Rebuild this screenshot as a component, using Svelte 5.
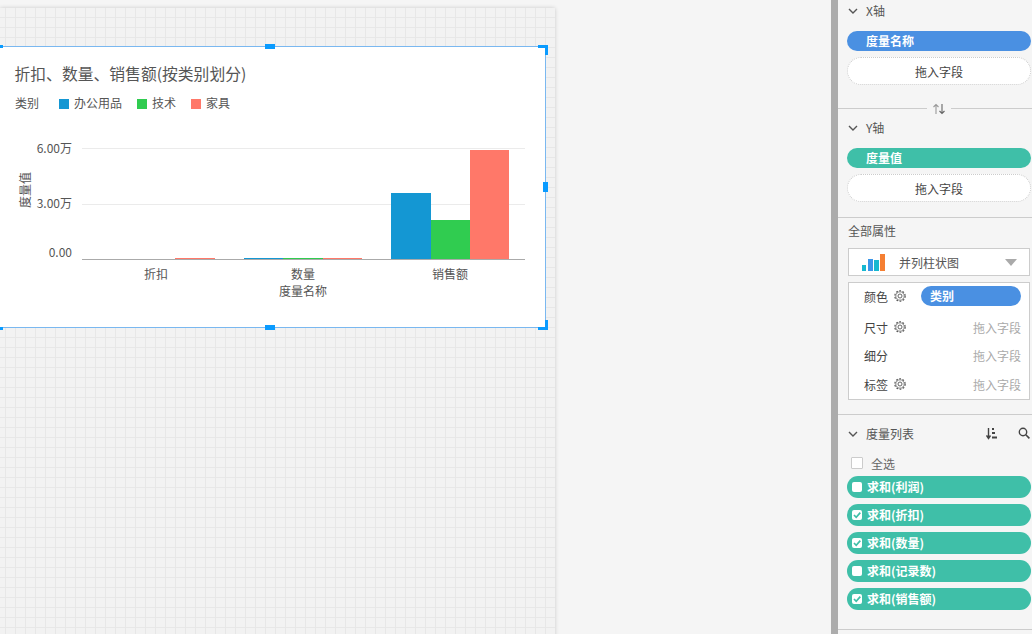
<script>
	const bars = [
		{ x: 175, y: 258, w: 40, h: 1, c: '#ff7869' },
		{ x: 244, y: 258, w: 39, h: 1, c: '#1497d3' },
		{ x: 283, y: 258, w: 40, h: 1, c: '#30cc50' },
		{ x: 323, y: 258, w: 39, h: 1, c: '#ff7869' },
		{ x: 391, y: 193, w: 40, h: 66, c: '#1497d3' },
		{ x: 431, y: 220, w: 39, h: 39, c: '#30cc50' },
		{ x: 470, y: 150, w: 39, h: 109, c: '#ff7869' }
	];
	const legend = [
		{ label: '办公用品', x: 59, c: '#1497d3' },
		{ label: '技术', x: 137, c: '#30cc50' },
		{ label: '家具', x: 191, c: '#ff7869' }
	];
	const handles = ['top', 'right', 'bottom'];
	const props = [
		{ label: '尺寸', gear: true },
		{ label: '细分', gear: false },
		{ label: '标签', gear: true }
	];
	const measures = [
		{ label: '求和(利润)', on: false },
		{ label: '求和(折扣)', on: true },
		{ label: '求和(数量)', on: true },
		{ label: '求和(记录数)', on: false },
		{ label: '求和(销售额)', on: true }
	];
</script>

{#snippet chevron()}
	<svg class="chevron" width="10" height="6" viewBox="0 0 10 6"><path d="M1 1l4 4 4-4" fill="none" stroke="#555" stroke-width="1.4" /></svg>
{/snippet}

{#snippet gear()}
	<svg class="gear" width="12" height="12" viewBox="0 0 12 12">
		<circle cx="6" cy="6" r="5.2" fill="none" stroke="#555" stroke-width="1.1" stroke-dasharray="1.8 1.5" />
		<circle cx="6" cy="6" r="4.2" fill="none" stroke="#555" stroke-width="0.7" />
		<circle cx="6" cy="6" r="2" fill="none" stroke="#555" stroke-width="0.9" />
	</svg>
{/snippet}

<div class="page">
	<main class="stage">
		<div class="canvas">
			<div class="widget">
				<svg class="chart" width="545" height="280" viewBox="0 47 545 280">
					<text class="title" x="14.5" y="80">折扣、数量、销售额(按类别划分)</text>
					<text class="txt" x="15" y="108">类别</text>
					{#each legend as item}
						<rect x={item.x} y="99" width="10" height="10" fill={item.c} />
						<text class="txt" x={item.x + 15} y="108">{item.label}</text>
					{/each}

					<line x1="82" x2="525" y1="148.5" y2="148.5" stroke="#ebebeb" />
					<line x1="82" x2="525" y1="204.5" y2="204.5" stroke="#ebebeb" />
					{#each bars as b}
						<rect x={b.x} y={b.y} width={b.w} height={b.h} fill={b.c} />
					{/each}
					<line x1="82" x2="525" y1="259.5" y2="259.5" stroke="#aaa" />

					<text class="txt end" x="72" y="153">6.00万</text>
					<text class="txt end" x="72" y="208">3.00万</text>
					<text class="txt end" x="72" y="257">0.00</text>
					<text class="txt mid" transform="translate(30 190) rotate(-90)">度量值</text>

					<text class="txt mid" x="156" y="279">折扣</text>
					<text class="txt mid" x="303" y="279">数量</text>
					<text class="txt mid" x="450" y="279">销售额</text>
					<text class="txt mid" x="303" y="296">度量名称</text>
				</svg>
				{#each handles as side}
					<span class="handle {side}"></span>
				{/each}
				<span class="corner tl"></span>
				<span class="corner bl"></span>
				<span class="corner tr"></span>
				<span class="corner br"></span>
			</div>
		</div>
	</main>

	<aside class="panel">
		<section class="axis x">
			<div class="head">{@render chevron()}<span>X轴</span></div>
			<div class="pill blue">度量名称</div>
			<div class="drop">拖入字段</div>
		</section>
		<div class="swap">
			<span>
				<svg width="14" height="12" viewBox="0 0 14 12">
					<path d="M4 11V2M1.500 4L4 1.500 6.500 4" fill="none" stroke="#999" stroke-width="1.1" />
					<path d="M10 1v9M7.500 8L10 10.500 12.500 8" fill="none" stroke="#666" stroke-width="1.1" />
				</svg>
			</span>
		</div>
		<section class="axis y">
			<div class="head">{@render chevron()}<span>Y轴</span></div>
			<div class="pill green">度量值</div>
			<div class="drop">拖入字段</div>
		</section>

		<section class="attrs">
			<div class="attrs-title">全部属性</div>
			<div class="select">
				<svg width="23" height="17" viewBox="0 0 23 17">
					<rect x="0" y="11" width="4" height="6" fill="#16b8d0" />
					<rect x="6" y="5" width="5" height="12" fill="#3a96e8" />
					<rect x="12" y="6" width="5" height="11" fill="#16b8d0" />
					<rect x="18" y="0" width="5" height="17" fill="#f57f32" />
				</svg>
				<span class="select-text">并列柱状图</span>
				<i class="caret"></i>
			</div>
			<div class="prop-box">
				<div class="prop first">
					<span class="prop-label">颜色</span>{@render gear()}
					<div class="pill blue small">类别</div>
				</div>
				{#each props as p}
					<div class="prop">
						<span class="prop-label">{p.label}</span>
						{#if p.gear}{@render gear()}{/if}
						<span class="hint">拖入字段</span>
					</div>
				{/each}
			</div>
		</section>

		<section class="list">
			<div class="head">
				{@render chevron()}<span>度量列表</span>
				<svg class="sort" width="11" height="13" viewBox="0 0 11 13">
					<path d="M2.500 1v10M.5 8.500L2.500 11.500 4.500 8.500" fill="none" stroke="#444" stroke-width="1.4" />
					<path d="M6 1h2v2H6zM6 5h3v2H6zM6 9.500h5v2H6z" fill="#444" />
				</svg>
				<svg class="search" width="12" height="12" viewBox="0 0 12 12">
					<circle cx="5" cy="5" r="3.700" fill="none" stroke="#444" stroke-width="1.4" />
					<path d="M7.800 7.800l3.600 3.600" stroke="#444" stroke-width="1.6" />
				</svg>
			</div>
			<label class="all"><i class="box"></i><span>全选</span></label>
			<div class="measures">
				{#each measures as m}
					<div class="pill green measure">
						<i class="check">
							{#if m.on}
								<svg width="10" height="10" viewBox="0 0 10 10"><path d="M2 5l2.200 2.300L8.300 2.600" fill="none" stroke="#3fbfa8" stroke-width="1.700" /></svg>
							{/if}
						</i>
						<span>{m.label}</span>
					</div>
				{/each}
			</div>
		</section>
	</aside>
</div>

<style>
	:global(body) {
		margin: 0;
		background: #f5f5f5;
	}

	.page {
		display: flex;
		height: 634px;
		overflow: hidden;
		font-family: "Noto Sans CJK SC", "Noto Sans", sans-serif;
		font-size: 12px;
		color: #555;
	}

	.stage {
		flex: 1;
		padding-top: 8px;
		min-width: 0;
	}

	.canvas {
		position: relative;
		width: 555px;
		height: 640px;
		background-color: #f2f2f2;
		background-image:
			linear-gradient(to right, #e7e7e7 1px, transparent 1px),
			linear-gradient(to bottom, #e7e7e7 1px, transparent 1px);
		background-size: 10px 10px;
		background-position: 5px 9px;
		box-shadow: 0 0 4px rgba(0, 0, 0, 0.18);
	}

	.widget {
		position: absolute;
		left: 0;
		top: 38px;
		width: 545px;
		height: 280px;
		background: #fff;
		border: 1px solid #7ab8f0;
		border-left: none;
	}

	.chart {
		display: block;
	}

	.title {
		font-size: 15.8px;
		fill: #555;
	}

	.txt {
		font-size: 12px;
		fill: #555;
	}

	.end {
		text-anchor: end;
	}

	.mid {
		text-anchor: middle;
	}

	.handle {
		position: absolute;
		background: #0a9bff;
	}

	.handle.top,
	.handle.bottom {
		left: 265px;
		width: 10px;
		height: 5px;
	}

	.handle.top {
		top: -3px;
	}

	.handle.bottom {
		bottom: -3px;
	}

	.handle.right {
		right: -3px;
		top: 135px;
		width: 5px;
		height: 10px;
	}

	.corner {
		position: absolute;
		box-sizing: border-box;
		width: 10px;
		height: 10px;
		border: 0 solid #0a9bff;
	}

	.corner.tl,
	.corner.bl {
		left: -7px;
	}

	.corner.tl {
		top: -2px;
		border-top-width: 3px;
	}

	.corner.bl {
		bottom: -3px;
		border-bottom-width: 3px;
	}

	.corner.tr {
		right: -3px;
		top: -2px;
		border-top-width: 3px;
		border-right-width: 3px;
	}

	.corner.br {
		right: -3px;
		bottom: -3px;
		border-bottom-width: 3px;
		border-right-width: 3px;
	}

	.panel {
		width: 194px;
		flex: none;
		border-left: 7px solid #acacac;
		background: #f5f5f5;
	}

	.head {
		display: flex;
		align-items: center;
		height: 20px;
		padding-left: 10px;
	}

	.chevron {
		margin-right: 8px;
		margin-top: 2px;
	}

	.axis {
		padding-left: 9px;
		padding-right: 1px;
	}

	.axis .head {
		padding-left: 1px;
	}

	.axis.x {
		height: 108px;
	}

	.axis.y {
		box-sizing: border-box;
		height: 109px;
		padding-top: 8px;
		border-bottom: 1px solid #ccc;
	}

	.pill {
		border-radius: 11px;
		color: #fff;
		font-weight: 700;
	}

	.blue {
		background: #4a90e2;
	}

	.green {
		background: #3fbfa8;
	}

	.axis .pill {
		height: 20px;
		line-height: 20px;
		margin-top: 11px;
		padding-left: 19px;
		border-radius: 10px;
	}

	.drop {
		box-sizing: border-box;
		height: 28px;
		line-height: 27px;
		margin-top: 6px;
		text-align: center;
		color: #444;
		background: #fff;
		border: 1px dotted #ccc;
		border-radius: 14px;
	}

	.swap {
		display: flex;
		justify-content: center;
		align-items: center;
		height: 1px;
		background: #ccc;
		padding-left: 8px;
	}

	.swap span {
		display: flex;
		justify-content: center;
		align-items: center;
		width: 24px;
		height: 14px;
		background: #f5f5f5;
	}

	.attrs {
		box-sizing: border-box;
		height: 197px;
		padding: 3px 2px 0 10px;
		border-bottom: 1px solid #ccc;
	}

	.attrs-title {
		height: 20px;
		line-height: 20px;
	}

	.select {
		box-sizing: border-box;
		display: flex;
		align-items: center;
		height: 28px;
		margin-top: 7px;
		padding: 0 12px 0 13px;
		background: #fff;
		border: 1px solid #ccc;
	}

	.select-text {
		margin-left: 14px;
		flex: 1;
	}

	.caret {
		width: 0;
		height: 0;
		border-left: 6px solid transparent;
		border-right: 6px solid transparent;
		border-top: 7px solid #aaa;
	}

	.prop-box {
		box-sizing: border-box;
		height: 118px;
		margin-top: 6px;
		padding: 3px 8px 0 15px;
		background: #fff;
		border: 1px solid #ccc;
	}

	.prop {
		display: flex;
		align-items: center;
		height: 28.5px;
	}

	.prop.first {
		height: 20px;
		margin-bottom: 7px;
	}

	.prop-label {
		margin-right: 6px;
		color: #444;
	}

	.pill.small {
		width: 100px;
		height: 20px;
		line-height: 20px;
		margin-left: auto;
		padding-left: 9px;
		box-sizing: border-box;
		border-radius: 10px;
	}

	.hint {
		margin-left: auto;
		color: #aaa;
	}

	.list {
		box-sizing: border-box;
		height: 215px;
		padding-top: 6px;
		border-bottom: 1px solid #ccc;
	}

	.list .head {
		height: 24px;
	}

	.sort {
		margin-left: auto;
	}

	.search {
		margin-left: 21px;
		margin-right: 2px;
	}

	.all {
		display: flex;
		align-items: center;
		height: 22px;
		margin-top: 7px;
		padding-left: 13px;
		color: #666;
	}

	.box {
		box-sizing: border-box;
		width: 12px;
		height: 12px;
		margin-right: 8px;
		background: #fff;
		border: 1px solid #ccc;
		border-radius: 1px;
	}

	.measures {
		display: flex;
		flex-direction: column;
		gap: 6px;
		margin: 2px 1px 0 9px;
	}

	.measure {
		display: flex;
		align-items: center;
		height: 22px;
		padding-left: 5px;
	}

	.measure span {
		margin-bottom: 2px;
	}

	.check {
		display: flex;
		width: 10px;
		height: 10px;
		margin-right: 5px;
		background: #fff;
		border-radius: 2px;
	}
</style>
